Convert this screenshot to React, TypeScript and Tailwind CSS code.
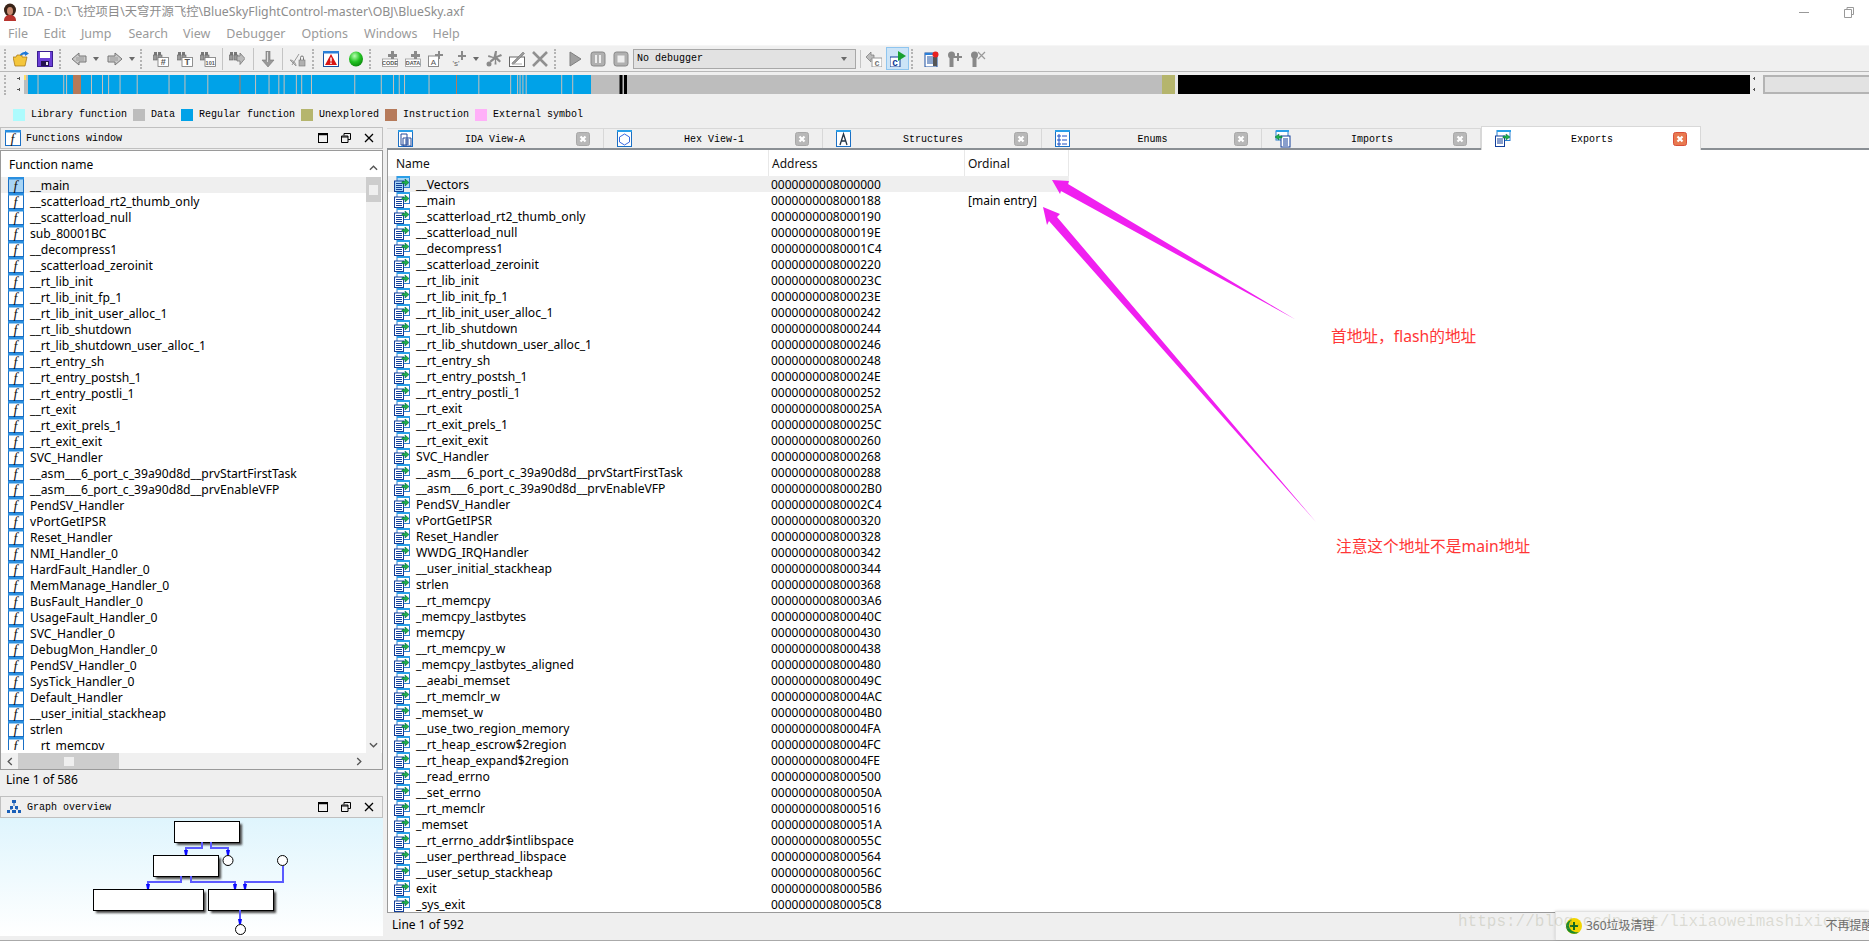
import React from "react";

const leftNames = ["__main","__scatterload_rt2_thumb_only","__scatterload_null","sub_80001BC","__decompress1","__scatterload_zeroinit","__rt_lib_init","__rt_lib_init_fp_1","__rt_lib_init_user_alloc_1","__rt_lib_shutdown","__rt_lib_shutdown_user_alloc_1","__rt_entry_sh","__rt_entry_postsh_1","__rt_entry_postli_1","__rt_exit","__rt_exit_prels_1","__rt_exit_exit","SVC_Handler","__asm___6_port_c_39a90d8d__prvStartFirstTask","__asm___6_port_c_39a90d8d__prvEnableVFP","PendSV_Handler","vPortGetIPSR","Reset_Handler","NMI_Handler_0","HardFault_Handler_0","MemManage_Handler_0","BusFault_Handler_0","UsageFault_Handler_0","SVC_Handler_0","DebugMon_Handler_0","PendSV_Handler_0","SysTick_Handler_0","Default_Handler","__user_initial_stackheap","strlen","__rt_memcpy"];

const exportsList: [string, string][] = [["__Vectors","8000000"],["__main","8000188"],["__scatterload_rt2_thumb_only","8000190"],["__scatterload_null","800019E"],["__decompress1","80001C4"],["__scatterload_zeroinit","8000220"],["__rt_lib_init","800023C"],["__rt_lib_init_fp_1","800023E"],["__rt_lib_init_user_alloc_1","8000242"],["__rt_lib_shutdown","8000244"],["__rt_lib_shutdown_user_alloc_1","8000246"],["__rt_entry_sh","8000248"],["__rt_entry_postsh_1","800024E"],["__rt_entry_postli_1","8000252"],["__rt_exit","800025A"],["__rt_exit_prels_1","800025C"],["__rt_exit_exit","8000260"],["SVC_Handler","8000268"],["__asm___6_port_c_39a90d8d__prvStartFirstTask","8000288"],["__asm___6_port_c_39a90d8d__prvEnableVFP","80002B0"],["PendSV_Handler","80002C4"],["vPortGetIPSR","8000320"],["Reset_Handler","8000328"],["WWDG_IRQHandler","8000342"],["__user_initial_stackheap","8000344"],["strlen","8000368"],["__rt_memcpy","80003A6"],["_memcpy_lastbytes","800040C"],["memcpy","8000430"],["__rt_memcpy_w","8000438"],["_memcpy_lastbytes_aligned","8000480"],["__aeabi_memset","800049C"],["__rt_memclr_w","80004AC"],["_memset_w","80004B0"],["__use_two_region_memory","80004FA"],["__rt_heap_escrow$2region","80004FC"],["__rt_heap_expand$2region","80004FE"],["__read_errno","8000500"],["__set_errno","800050A"],["__rt_memclr","8000516"],["_memset","800051A"],["__rt_errno_addr$intlibspace","800055C"],["__user_perthread_libspace","8000564"],["__user_setup_stackheap","800056C"],["exit","80005B6"],["_sys_exit","80005C8"]];

const barLines = [87,150,157,218,245,260,288,330,408,447,503,620,653,677,690,720,733,757,863,928,958,972,985,1045,1167,1245,1262,1268,1275,1283,1370,1397];

const Ic = ({ className = "", children }: { className?: string; children?: React.ReactNode }) => (
  <svg viewBox="0 0 16 16" className={"w-4 h-4 shrink-0 " + className}>{children}</svg>
);

const Sep = ({ className = "" }: { className?: string }) => (
  <div className={"h-[22px] w-[2px] shrink-0 border-l border-[#c4c4c4] border-r-white " + className} />
);
const Grip = ({ className = "" }: { className?: string }) => (
  <div className={"h-[20px] w-[2px] shrink-0 border-l-2 border-dotted border-[#b4b4b4] " + className} />
);
const Dd = ({ className = "" }: { className?: string }) => (
  <svg viewBox="0 0 6 4" className={"w-[6px] h-1 shrink-0 " + className}><path d="M0 0h6L3 4z" fill="#6a6a6a" /></svg>
);

const Binoc = () => (
  <g>
    <rect x="1" y="1" width="3" height="3" fill="#777" />
    <rect x="5" y="1" width="3" height="3" fill="#777" />
    <rect x="0" y="4" width="4" height="5" fill="#999" stroke="#666" strokeWidth=".6" />
    <rect x="5" y="4" width="4" height="5" fill="#999" stroke="#666" strokeWidth=".6" />
  </g>
);
const BinocText = ({ t, size = 9, className = "" }: { t: string; size?: number; className?: string }) => (
  <Ic className={className}>
    <Binoc />
    <rect x="5" y="6.5" width="10.5" height="9" fill="#fff" stroke="#777" strokeWidth=".8" />
    <text x="10.2" y="14" textAnchor="middle" fontSize={size} fontFamily="Liberation Sans" fontWeight="700" fill="#555">{t}</text>
  </Ic>
);
const PlusDoc = ({ t, className = "" }: { t: string; className?: string }) => (
  <Ic className={className}>
    <path d="M9 0h3v3h3v3h-3v3H9V6H6V3h3z" fill="#8a8a8a" />
    <rect x="0.5" y="8" width="15" height="7.5" fill="#fff" stroke="#8a8a8a" strokeWidth=".7" />
    <text x="8" y="14" textAnchor="middle" fontSize="5.5" fontFamily="Liberation Sans" fontWeight="700" fill="#555">{t}</text>
  </Ic>
);

const FIcon = ({ active = false }: { active?: boolean }) => (
  <svg viewBox="0 0 16 16" className="w-4 h-4 shrink-0">
    <rect x=".5" y=".5" width="15" height="15" fill={active ? "#a8d4f4" : "#fff"} stroke="#1a6fc4" />
    <rect x="0" y="0" width="16" height="2.5" fill="#2a8fe0" />
    <text x="7.5" y="13.5" textAnchor="middle" fontSize="14" fontStyle="italic" fontFamily="Liberation Serif" fill="#111">f</text>
  </svg>
);

const ExpIcon = ({ active = false }: { active?: boolean }) => (
  <svg viewBox="0 0 16 16" className="w-4 h-4 shrink-0">
    <rect x="3" y=".5" width="12.5" height="11" fill={active ? "#a8d4f4" : "#fff"} stroke="#2a7fd0" />
    <rect x="3" y="0" width="13" height="2" fill="#2a9fe8" />
    <rect x=".5" y="5" width="9" height="10.5" fill={active ? "#a8d4f4" : "#fff"} stroke="#123f9a" />
    <path d="M2 7.5h6M2 9.5h6M2 11.5h6M2 13.5h6" stroke="#123f9a" strokeWidth="1" />
    <path d="M8 5.5h3V3l4 3.5-4 3.5V7.5H8z" fill="#1fb04a" stroke="#064" strokeWidth=".6" />
  </svg>
);

const TabBox = ({ n }: { n: number }) => (
  <svg viewBox="0 0 16 18" className="w-4 h-[18px] shrink-0">
    {n === 4 ? (
      <g>
        <rect x="1" y="1" width="12" height="9" fill="#fff" stroke="#2a7fd0" />
        <rect x="1" y="0" width="13" height="2" fill="#2a9fe8" />
        <rect x="6" y="6" width="9" height="11" fill="#fff" stroke="#123f9a" />
        <path d="M8 9h5M8 11h5M8 13h5M8 15h5" stroke="#123f9a" />
        <path d="M7 6H4V4L0 7l4 3V8h3z" fill="#1fb04a" stroke="#064" strokeWidth=".5" />
      </g>
    ) : n === 5 ? (
      <g>
        <rect x="2" y="0.5" width="13" height="10" fill="#fff" stroke="#2a7fd0" />
        <rect x="2" y="0" width="14" height="2" fill="#2a9fe8" />
        <rect x=".5" y="6" width="9" height="10.5" fill="#fff" stroke="#123f9a" />
        <path d="M2 9h6M2 11h6M2 13h6" stroke="#123f9a" />
        <path d="M8 6h3V4l4 3-4 3V8H8z" fill="#1fb04a" stroke="#064" strokeWidth=".5" />
      </g>
    ) : (
      <g>
        <rect x=".5" y=".5" width="14" height="16" fill="#fff" stroke="#1a6fc4" />
        <rect x="0" y="0" width="15" height="2" fill="#2a9fe8" />
        {n === 0 && <path d="M3 4h6v11H3zM5 8h8v8H5zM7 10h4M7 12h4M7 14h4" fill="none" stroke="#244a9a" />}
        {n === 1 && <path d="M7.5 4l5 3v5l-5 3-5-3V7z" fill="none" stroke="#3a6ae0" />}
        {n === 2 && <path d="M4 15l3.5-11 3.5 11M5.5 11h4" fill="none" stroke="#234" strokeWidth="1.3" />}
        {n === 3 && <path d="M3 5h2v2H3zM3 9h2v2H3zM3 13h2v2H3zM7 6h5M7 10h5M7 14h5" fill="none" stroke="#1a4fc4" />}
      </g>
    )}
  </svg>
);

const Close = ({ on = false }: { on?: boolean }) => (
  <svg viewBox="0 0 14 14" className="w-[14px] h-[14px] shrink-0">
    <rect x=".5" y=".5" width="13" height="13" rx="2" fill={on ? "#e8794f" : "#b8b8b8"} stroke={on ? "#d94f3a" : "#a8a8a8"} />
    <path d="M4.5 4.5l5 5M9.5 4.5l-5 5" stroke="#fff" strokeWidth="2.2" />
  </svg>
);

const tabs = [
  { t: "IDA View-A", c: "w-[217px] pl-[11px]" },
  { t: "Hex View-1", c: "w-[219px] pl-[13px]" },
  { t: "Structures", c: "w-[219px] pl-[13px]" },
  { t: "Enums", c: "w-[220px] pl-[13px]" },
  { t: "Imports", c: "w-[219px] pl-[13px]" },
];

const WinBtns = () => (
  <div className="ml-auto flex items-center gap-[13px] pr-[8px]">
    <svg viewBox="0 0 10 10" className="w-[10px] h-[10px]"><rect x=".5" y=".5" width="9" height="9" fill="none" stroke="#000" /><path d="M0 1.5h10" stroke="#000" strokeWidth="1.5" /></svg>
    <svg viewBox="0 0 10 10" className="w-[10px] h-[10px]"><path d="M3 2.5V.5h6.5v6H7M.5 3h6.5v6.5H.5z" fill="none" stroke="#000" /><path d="M0 4h7" stroke="#000" /></svg>
    <svg viewBox="0 0 10 10" className="w-[10px] h-[10px]"><path d="M1 1l8 8M9 1l-8 8" stroke="#000" strokeWidth="1.3" /></svg>
  </div>
);

const Legend = ({ c, t, className }: { c: string; t: string; className: string }) => (
  <div className={"flex items-center " + className}>
    <div className={"w-3 h-3 shrink-0 " + c} />
    <span className="ml-[6px] text-[10px] leading-3 whitespace-pre font-['Liberation_Mono',monospace] text-black">{t}</span>
  </div>
);

export default function App() {
  return (
    <div className="relative w-[1869px] h-[941px] overflow-hidden bg-[#efefef] text-black font-['Noto_Sans','Noto_Sans_CJK_SC',sans-serif]">
      {/* title + menu */}
      <div className="h-[45px] bg-white">
        <div className="h-[24px] flex items-center">
          <svg viewBox="0 0 16 18" className="ml-[2px] w-4 h-[18px]">
            <ellipse cx="8" cy="7" rx="6" ry="6.5" fill="#3a2418" />
            <ellipse cx="8" cy="8" rx="3" ry="4" fill="#c98a70" />
            <path d="M2 18c0-5 3-6 6-6s6 1 6 6z" fill="#b8342e" />
          </svg>
          <span className="ml-[5px] text-[12.3px] text-[#8d8d8d] whitespace-pre">IDA - D:\飞控项目\天穹开源飞控\BlueSkyFlightControl-master\OBJ\BlueSky.axf</span>
          <div className="ml-auto flex items-center">
            <div className="w-[10px] h-px bg-[#999]" />
            <svg viewBox="0 0 10 11" className="ml-[35px] mr-[15px] w-[10px] h-[11px]"><path d="M3 2V.5h6.5v7H8M.5 2.5h7v8h-7z" fill="none" stroke="#999" /></svg>
          </div>
        </div>
        <div className="h-[21px] flex items-center text-[12.5px] text-[#9a9a9a]">
          <span className="ml-[8px]">File</span>
          <span className="ml-[15.5px]">Edit</span>
          <span className="ml-[15px]">Jump</span>
          <span className="ml-[17px]">Search</span>
          <span className="ml-[15px]">View</span>
          <span className="ml-[16px]">Debugger</span>
          <span className="ml-[16px]">Options</span>
          <span className="ml-[16px]">Windows</span>
          <span className="ml-[15px]">Help</span>
        </div>
      </div>

      {/* toolbar */}
      <div className="h-[27px] border-t border-[#f6f6f6] border-b border-b-[#b8b8b8] bg-[#f0f0f0] flex items-center">
        <Grip className="ml-[4px]" />
        <Ic className="ml-[7px]">
          <path d="M0 6h3l1-2h5v2h5l-2 9H2z" fill="#f4c63c" stroke="#a07010" strokeWidth=".7" />
          <path d="M7 5c0-3 3-4 5-4V0l4 2.5L12 5V3.5C10 3.5 8 4 7 5z" fill="#1e78d8" />
        </Ic>
        <Ic className="ml-[8px]">
          <rect x=".5" y=".5" width="15" height="15" fill="#6b3fd6" stroke="#3a1e90" />
          <rect x="3" y="1" width="10" height="6" fill="#fff" />
          <rect x="4" y="10" width="8" height="5" fill="#24144e" />
          <rect x="9" y="11" width="2" height="3" fill="#eee" />
        </Ic>
        <Grip className="ml-[6px]" />
        <Ic className="ml-[10px]"><path d="M1 8l7-6v3h7v6H8v3z" fill="#c8c8c8" stroke="#777" /><path d="M5 7h8M5 9h8" stroke="#888" strokeWidth=".7" /></Ic>
        <Dd className="ml-[6px]" />
        <Ic className="ml-[8px]"><path d="M15 8L8 2v3H1v6h7v3z" fill="#c8c8c8" stroke="#777" /><path d="M3 7h8M3 9h8" stroke="#888" strokeWidth=".7" /></Ic>
        <Dd className="ml-[6px]" />
        <Grip className="ml-[5px]" />
        <BinocText t="#" size={9} className="ml-[11px]" />
        <BinocText t="T" size={9} className="ml-[8px]" />
        <BinocText t="101" size={5.5} className="ml-[7px]" />
        <Sep className="ml-[6px]" />
        <Ic className="ml-[5px]"><Binoc /><path d="M8 5h3V2l5 5.5-5 6V10H8z" fill="#bbb" stroke="#777" strokeWidth=".8" /></Ic>
        <Sep className="ml-[8px]" />
        <Ic className="ml-[5px]"><path d="M6 0h4v9h4l-6 7-6-7h4z" fill="#999" stroke="#777" strokeWidth=".6" /><path d="M7 1h1v10H7z" fill="#ddd" /></Ic>
        <Sep className="ml-[6px]" />
        <Ic className="ml-[6px]"><path d="M2 14L9 3M0 9c3 0 6 3 6 6z" fill="#ccc" stroke="#999" /><rect x="9" y="9" width="6" height="6" fill="#b0b0b0" stroke="#777" strokeWidth=".6" /><path d="M10.5 9V6.5a1.5 1.5 0 013 0V9" fill="none" stroke="#777" /></Ic>
        <Grip className="ml-[6px]" />
        <Ic className="ml-[9px]">
          <rect x=".5" y=".5" width="15" height="15" fill="#fff" stroke="#1a4fa0" />
          <rect x="0" y="0" width="16" height="2.5" fill="#2a7fd8" />
          <path d="M8 3l6 11H2z" fill="#d81414" />
          <path d="M7.3 6.5h1.4v4H7.3zM7.3 11.5h1.4v1.5H7.3z" fill="#fff" />
        </Ic>
        <Ic className="ml-[9px]">
          <defs><radialGradient id="gb" cx=".4" cy=".3" r=".8"><stop offset="0" stopColor="#b6ffb0" /><stop offset=".5" stopColor="#22c322" /><stop offset="1" stopColor="#067a06" /></radialGradient></defs>
          <ellipse cx="8" cy="8" rx="7" ry="7.6" fill="url(#gb)" />
        </Ic>
        <Grip className="ml-[5px]" />
        <PlusDoc t="CODE" className="ml-[11px]" />
        <PlusDoc t="DATA" className="ml-[7px]" />
        <Ic className="ml-[7px]"><path d="M10 0h2v3h3v2h-3v3h-2V5H7V3h3z" fill="#8a8a8a" /><rect x=".5" y="5" width="10" height="10.5" fill="#fff" stroke="#8a8a8a" /><text x="5.5" y="13.5" textAnchor="middle" fontSize="8" fontFamily="Liberation Sans" fill="#555">A</text></Ic>
        <Ic className="ml-[7px]"><path d="M10 0h2v4h3v2h-3v3h-2V6H7V4h3z" fill="#8a8a8a" /><text x="5" y="15" textAnchor="middle" fontSize="8" fontFamily="Liberation Sans" fill="#666">'s'</text></Ic>
        <Dd className="ml-[6px]" />
        <Ic className="ml-[7px]"><path d="M9 0h2l-.5 5 4.5-2 1 2-4.500 1.500L15 10l-1.500 1.500-3.500-3 .5 5H8.500L9 8.500l-4 3L3.500 10 7 7 2 6l.5-2L7.500 6z" fill="#8a8a8a" /><circle cx="3" cy="13" r="2.500" fill="#8a8a8a" /></Ic>
        <Ic className="ml-[7px]"><rect x=".5" y="6" width="15" height="9.500" fill="#fff" stroke="#666" /><path d="M3 12L14 1l1.500 1.500L5 13H3z" fill="#999" stroke="#666" strokeWidth=".5" /><path d="M3 13h10" stroke="#aaa" /></Ic>
        <Ic className="ml-[7px]"><path d="M1 1l14 14M15 1L1 15" stroke="#909090" strokeWidth="2.600" /></Ic>
        <Grip className="ml-[6px]" />
        <Ic className="ml-[11px]"><path d="M3 1l11 7-11 7z" fill="#a0a0a0" stroke="#808080" /></Ic>
        <Ic className="ml-[7px]"><rect x="1" y="1" width="14" height="14" rx="2.500" fill="#b0b0b0" stroke="#888" /><path d="M5 4h2v8H5zM9 4h2v8H9z" fill="#eee" /></Ic>
        <Ic className="ml-[7px]"><rect x="1" y="1" width="14" height="14" rx="2.500" fill="#b0b0b0" stroke="#888" /><rect x="4.500" y="4.500" width="7" height="7" fill="#eee" /></Ic>
        <div className="ml-[4px] w-[223px] h-[20px] shrink-0 border border-[#a8a8a8] bg-[#e2e2e2] flex items-center px-[3px]">
          <span className="text-[10px] font-['Liberation_Mono',monospace] whitespace-pre">No debugger</span>
          <Dd className="ml-auto mr-[5px]" />
        </div>
        <div className="ml-[4px] w-px h-[18px] shrink-0 bg-[#c4c4c4]" />
        <Ic className="ml-[5px]"><path d="M0 6l5-5v3h3v4H5v3z" fill="#bbb" stroke="#777" strokeWidth=".7" /><rect x="6" y="7" width="10" height="9" fill="#fff" stroke="#999" /><text x="11" y="15" textAnchor="middle" fontSize="9" fontFamily="Liberation Sans" fontWeight="700" fill="#777">c</text></Ic>
        <div className="ml-[4px] w-[23px] h-[23px] shrink-0 bg-[#cce4f7] border border-[#8fc5ef] flex items-center justify-center">
          <Ic><rect x="0" y="6" width="10" height="10" fill="#fff" stroke="#123f9a" /><text x="5" y="14.500" textAnchor="middle" fontSize="10" fontFamily="Liberation Sans" fontWeight="700" fill="#123f9a">c</text><path d="M8 0l8 5-8 5z" fill="#18a030" /></Ic>
        </div>
        <Grip className="ml-[2px]" />
        <Ic className="ml-[11px]"><rect x="1" y="2" width="12" height="14" fill="#fff" stroke="#1a4fa0" /><rect x="1" y="2" width="12" height="2" fill="#2a7fd8" /><path d="M3 6h6M3 8h6M3 10h6M3 12h6" stroke="#1a4fa0" /><rect x="9" y="6" width="4" height="9" fill="#555" /><circle cx="11.500" cy="3.500" r="3" fill="#e82020" /></Ic>
        <Ic className="ml-[7px]"><circle cx="4.500" cy="4" r="3.500" fill="#888" /><rect x="2.500" y="7" width="4" height="9" fill="#888" /><path d="M10 2h2v3h3v2h-3v3h-2V7H7V5h3z" fill="#888" /></Ic>
        <Ic className="ml-[7px]"><circle cx="4.500" cy="4" r="3.500" fill="#888" /><rect x="2.500" y="7" width="4" height="9" fill="#888" /><path d="M8 1l7 7M15 1L8 8" stroke="#999" strokeWidth="1.200" /></Ic>
      </div>

      {/* navigator + legend */}
      <div className="h-[55px] relative">
        <div className="flex items-start pt-[3px] h-[22px]">
          <Grip className="ml-[4px]" />
          <svg viewBox="0 0 4 16" className="ml-[11px] w-1 h-4 shrink-0 mt-[2px]"><path d="M0 1h2V0h1v3H2V2H0zM0 12h2v-1h1v3H2v-1H0z" fill="#555" /></svg>
          <svg viewBox="0 0 1726 19" preserveAspectRatio="none" className="ml-[3px] w-[1726px] h-[19px] shrink-0">
            <rect width="1726" height="19" fill="#000" />
            <rect x="0" width="567" height="19" fill="#bdbdbd" />
            <rect x="0" y="0" width="2" height="5" fill="#ffe066" />
            <rect x="4" width="563" height="19" fill="#00a2e8" />
            {barLines.map((x) => (
              <rect key={x} x={x / 2.45 - 22} width="1" height="19" fill="#c8c0b8" />
            ))}
            <rect x="49" width="8" height="19" fill="#b67a5a" />
            <rect x="215.500" width="1" height="19" fill="#b67a5a" />
            <rect x="432" width="1" height="19" fill="#b67a5a" />
            <rect x="595.500" width="3" height="19" fill="#000" />
            <rect x="600" width="3" height="19" fill="#000" />
            <rect x="567" width="28.500" height="19" fill="#bdbdbd" />
            <rect x="598.500" width="1.500" height="19" fill="#bdbdbd" />
            <rect x="603" width="535" height="19" fill="#bdbdbd" />
            <rect x="1138" width="13" height="19" fill="#b5b56d" />
            <rect x="1151" width="3" height="19" fill="#e8e8e8" />
          </svg>
          <svg viewBox="0 0 4 16" className="ml-[2px] w-1 h-4 shrink-0 mt-[2px]"><path d="M1 1h1V0h1v3H2V2H1zM1 12h1v-1h1v3H2v-1H1z" fill="#555" /></svg>
          <div className="ml-[7px] flex-1 h-[19px] border-2 border-[#b4b4b4] border-r-0 bg-[#e2e2e2]" />
        </div>
        <div className="flex items-center mt-[15px] h-3">
          <Legend c="bg-[#adfbfd]" t="Library function" className="ml-[13px]" />
          <Legend c="bg-[#bdbdbd]" t="Data" className="ml-[6px]" />
          <Legend c="bg-[#00a2e8]" t="Regular function" className="ml-[6px]" />
          <Legend c="bg-[#b5b56d]" t="Unexplored" className="ml-[6px]" />
          <Legend c="bg-[#b67a5a]" t="Instruction" className="ml-[6px]" />
          <Legend c="bg-[#ffb0f8]" t="External symbol" className="ml-[6px]" />
        </div>
      </div>

      {/* main */}
      <div className="flex h-[813px]">
        {/* left column */}
        <div className="w-[383px] shrink-0 flex flex-col">
          <div className="h-[22px] border border-[#c0c0c0] flex items-center pl-[4px]">
            <FIcon />
            <span className="ml-[5px] pt-px text-[10px] font-['Liberation_Mono',monospace] whitespace-pre">Functions window</span>
            <WinBtns />
          </div>
          <div className="h-[620px] mt-px border border-[#9a9a9a] bg-white flex flex-col">
            <div className="h-[26px] flex items-center pl-[8px] pt-px text-[12px]">Function name</div>
            <div className="h-[576px] flex">
              <div className="w-[365px] pl-[7px] h-[573px] overflow-hidden">
                {leftNames.map((n, i) => (
                  <div key={i} className={"h-4 flex items-start -ml-[7px] pl-[7px] " + (i === 0 ? "bg-[#efefef]" : "")}>
                    <FIcon active={i === 0} />
                    <span className="ml-[6px] text-[12.15px] leading-[18px] h-4 whitespace-pre">{n}</span>
                  </div>
                ))}
              </div>
              <div className="w-[15px] bg-[#f0f0f0] flex flex-col items-center">
                <svg viewBox="0 0 10 6" className="w-[9px] h-[6px] mt-[-12px] shrink-0 relative"><path d="M1 5l4-4 4 4" fill="none" stroke="#555" strokeWidth="1.500" /></svg>
                <div className="mt-[6px] w-full h-[25px] bg-[#cdcdcd] flex items-center justify-center"><div className="w-[9px] h-[10px] bg-[#efefef]" /></div>
                <svg viewBox="0 0 10 6" className="w-[9px] h-[6px] mt-auto mb-[5px]"><path d="M1 1l4 4 4-4" fill="none" stroke="#555" strokeWidth="1.500" /></svg>
              </div>
            </div>
            <div className="h-[16px] bg-[#f0f0f0] flex items-center">
              <svg viewBox="0 0 6 10" className="ml-[6px] w-[6px] h-[9px]"><path d="M5 1L1 5l4 4" fill="none" stroke="#555" strokeWidth="1.500" /></svg>
              <div className="ml-[5px] w-[101px] h-full bg-[#cdcdcd] flex items-center justify-center"><div className="w-[10px] h-[9px] bg-[#efefef]" /></div>
              <svg viewBox="0 0 6 10" className="ml-auto mr-[20px] w-[6px] h-[9px]"><path d="M1 1l4 4-4 4" fill="none" stroke="#555" strokeWidth="1.500" /></svg>
            </div>
          </div>
          <div className="h-[26px] flex items-start pt-px pl-[6px] text-[12px] leading-[18px]">Line 1 of 586</div>
          <div className="h-[22px] border border-[#c0c0c0] flex items-center pl-[5px]">
            <svg viewBox="0 0 16 16" className="w-4 h-4 shrink-0">
              <path d="M6 1h4v3H6zM1 11h3v3H1zM6 11h4v3H6zM12 11h3v3h-3zM4 7h3v3H4zM9 7h3v3H9z" fill="#1a5fb8" />
              <path d="M8 4v3M5 7v4M11 7v4" stroke="#1a5fb8" />
            </svg>
            <span className="ml-[5px] pt-px text-[10px] font-['Liberation_Mono',monospace] whitespace-pre">Graph overview</span>
            <WinBtns />
          </div>
          <div className="h-[118px] bg-gradient-to-b from-[#dff5fd] to-white">
            <svg viewBox="0 818 383 118" className="w-[383px] h-[118px]">
              <defs><filter id="sh"><feGaussianBlur stdDeviation="1" /></filter></defs>
              {[[174,821,65,21],[153,855,65,21],[93,889,110,21],[208,889,65,21]].map(([x,y,w,h],i) => (
                <g key={i}>
                  <rect x={x+3} y={y+3} width={w} height={h} fill="#444" filter="url(#sh)" />
                  <rect x={x+.5} y={y+.5} width={w} height={h} fill="#fff" stroke="#000" />
                </g>
              ))}
              <path d="M202 842v6h-16v5M211 842v6h17v5M181 876v6h-33v5M191 876v6h44v5M283 866v16h-38v5M240 910v13" fill="none" stroke="#5a5aff" strokeWidth="2" />
              <path d="M184 850h4l-1 5h-2zM226 850h4l-1 5h-2zM146 884h4l-1 5h-2zM233 884h4l-1 5h-2zM243 884h4l-1 5h-2zM238 919h4l-1 5h-2z" fill="#0a0aff" />
              <circle cx="228" cy="860.500" r="5" fill="#fff" stroke="#000" />
              <circle cx="282.500" cy="860.500" r="5" fill="#fff" stroke="#000" />
              <circle cx="240.500" cy="929.500" r="5" fill="#fff" stroke="#000" />
            </svg>
          </div>
        </div>

        {/* right column */}
        <div className="ml-[4px] flex-1 flex flex-col">
          <div className="h-[23px] flex border-b-2 border-[#8a8f94] items-stretch">
            {tabs.map((t, i) => (
              <div key={t.t} className={"mt-px flex items-center pr-[13px] border-t border-r border-[#d8d8d8] " + t.c}>
                <TabBox n={i} />
                <span className="flex-1 text-center pt-[2px] text-[10px] font-['Liberation_Mono',monospace] whitespace-pre">{t.t}</span>
                <Close />
              </div>
            ))}
            <div className="-mt-px w-[220px] h-[24px] pl-[13px] pr-[13px] bg-white border border-b-0 border-[#d8d8d8] flex items-center">
              <TabBox n={5} />
              <span className="flex-1 text-center pt-px text-[10px] font-['Liberation_Mono',monospace] whitespace-pre">Exports</span>
              <Close on />
            </div>
          </div>
          <div className="h-[763px] border-l border-b border-[#9a9a9a] bg-white">
            <div className="h-[26px] flex text-[12px] text-[#111]">
              <div className="w-[381px] pl-[8px] pt-px border-r border-[#e8e8e8] flex items-center">Name</div>
              <div className="w-[196px] pl-[3px] pt-px border-r border-[#e8e8e8] flex items-center">Address</div>
              <div className="w-[104px] pl-[3px] pt-px border-r border-[#e8e8e8] flex items-center">Ordinal</div>
            </div>
            {exportsList.map(([n, a], i) => (
              <div key={i} className={"w-[681px] h-4 flex items-start text-[12px] leading-[18px] whitespace-pre " + (i === 0 ? "bg-[#efefef]" : "")}>
                <div className="w-[381px] h-4 pl-[6px] flex items-start shrink-0">
                  <ExpIcon active={i === 0} />
                  <span className="ml-[6px] text-[12.15px]">{n}</span>
                </div>
                <div className="w-[196px] h-4 pl-[2px] shrink-0">{a.padStart(16, "0")}</div>
                <div className="h-4 pl-[3px]">{i === 1 ? "[main entry]" : ""}</div>
              </div>
            ))}
          </div>
          <div className="h-[26px] flex items-center pb-[2px] pl-[5px] text-[12px]">Line 1 of 592</div>
        </div>
      </div>

      {/* bottom edge */}
      <div className="absolute left-0 right-0 bottom-0 h-px bg-[#aaaaaa]" />

      {/* annotations */}
      <svg viewBox="0 0 1869 941" className="absolute inset-0 w-[1869px] h-[941px] pointer-events-none">
        <polygon points="1052,180 1069,181 1068,184 1295.500,319.500 1061,191 1060,194" fill="#f020f0" />
        <polygon points="1043,207 1060,214 1057,217 1316,522 1049,221 1047,225" fill="#f020f0" />
      </svg>
      <div className="absolute left-[1331px] top-[326px] text-[15.7px] leading-5 text-[#ff3636] whitespace-pre">首地址，flash的地址</div>
      <div className="absolute left-[1336px] top-[536px] text-[15.7px] leading-5 text-[#ff3636] whitespace-pre">注意这个地址不是main地址</div>

      {/* 360 notice */}
      <div className="absolute left-[1555px] top-[911px] w-[314px] h-[29px] bg-[#f5f5f5] border-t border-l border-[#e2e2e2] shadow-[0_0_3px_rgba(0,0,0,0.15)] flex items-center">
        <svg viewBox="0 0 16 16" className="ml-[10px] w-4 h-4 shrink-0">
          <circle cx="8" cy="8" r="8" fill="#f2d400" />
          <path d="M0 8a8 8 0 0 0 13 6c-4 1-9-1-10-6 0-3 1-5 3-6-3 0-6 3-6 6z" fill="#1a8a2a" />
          <path d="M7 4h2v3h3v2H9v3H7V9H4V7h3z" fill="#126a20" />
        </svg>
        <span className="ml-[4px] text-[12px] text-[#6a6a6a] whitespace-pre">360垃圾清理</span>
        <span className="ml-[171px] text-[12px] text-[#6a6a6a] whitespace-pre">不再提醒</span>
      </div>
      <div className="absolute left-[1458px] top-[913px] text-[16px] leading-[18px] font-['Liberation_Mono',monospace] text-[#8c8c6e]/25 whitespace-pre pointer-events-none">https://blog.csdn.net/lixiaoweimashixiong</div>
    </div>
  );
}
